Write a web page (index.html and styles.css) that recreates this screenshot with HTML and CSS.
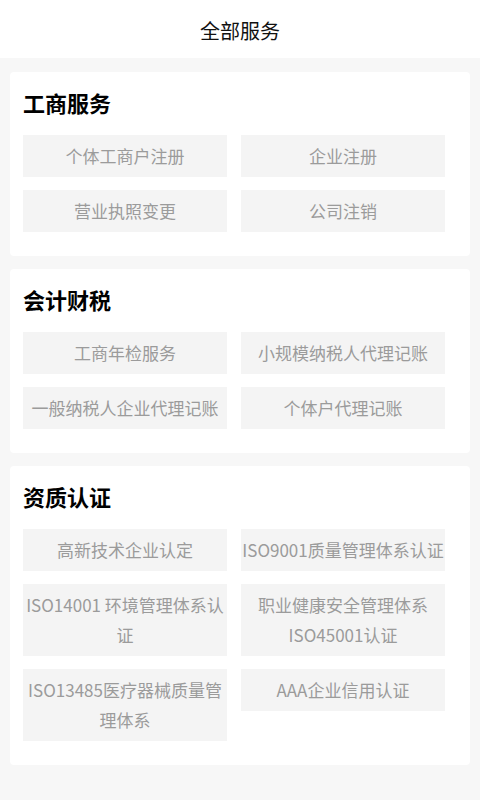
FILE: index.html
```html
<!DOCTYPE html>
<html lang="zh-CN">
<head>
<meta charset="utf-8">
<meta name="viewport" content="width=480">
<title>全部服务</title>
<link rel="stylesheet" href="styles.css">
</head>
<body>
<header class="topbar"><h1 class="topbar-title">全部服务</h1></header>
<main class="page">
  <section class="card">
    <h2 class="card-title">工商服务</h2>
    <div class="grid">
      <div class="item">个体工商户注册</div>
      <div class="item">企业注册</div>
      <div class="item">营业执照变更</div>
      <div class="item">公司注销</div>
    </div>
  </section>
  <section class="card">
    <h2 class="card-title">会计财税</h2>
    <div class="grid">
      <div class="item">工商年检服务</div>
      <div class="item">小规模纳税人代理记账</div>
      <div class="item">一般纳税人企业代理记账</div>
      <div class="item">个体户代理记账</div>
    </div>
  </section>
  <section class="card">
    <h2 class="card-title">资质认证</h2>
    <div class="grid">
      <div class="item">高新技术企业认定</div>
      <div class="item">ISO9001质量管理体系认证</div>
      <div class="item">ISO14001 环境管理体系认证</div>
      <div class="item">职业健康安全管理体系ISO45001认证</div>
      <div class="item">ISO13485医疗器械质量管理体系</div>
      <div class="item">AAA企业信用认证</div>
    </div>
  </section>
</main>
</body>
</html>
```
FILE: styles.css
```css
* { box-sizing: border-box; }
html, body {
  margin: 0;
  padding: 0;
  background: #f7f7f7;
  font-family: "Noto Sans CJK SC", "Noto Sans", sans-serif;
}
.topbar {
  height: 58px;
  background: #ffffff;
  display: flex;
  align-items: center;
  justify-content: center;
}
.topbar-title {
  margin: 4px 0 0;
  font-size: 20px;
  font-weight: 400;
  color: #111;
  line-height: 28px;
}
.page {
  padding: 14px 10px 20px;
  display: flex;
  flex-direction: column;
  gap: 13px;
}
.card {
  background: #ffffff;
  border-radius: 4px;
  padding: 18px 13px 24px;
}
.card-title {
  margin: 0 0 21px;
  font-size: 22px;
  line-height: 24px;
  font-weight: 700;
  color: #000;
}
.grid {
  display: grid;
  grid-template-columns: 204px 204px;
  column-gap: 14px;
  row-gap: 13px;
  align-items: start;
}
.item {
  background: #f4f4f4;
  color: #9b9b9b;
  font-size: 17px;
  line-height: 30px;
  padding: 6px 0;
  text-align: center;
}
```
